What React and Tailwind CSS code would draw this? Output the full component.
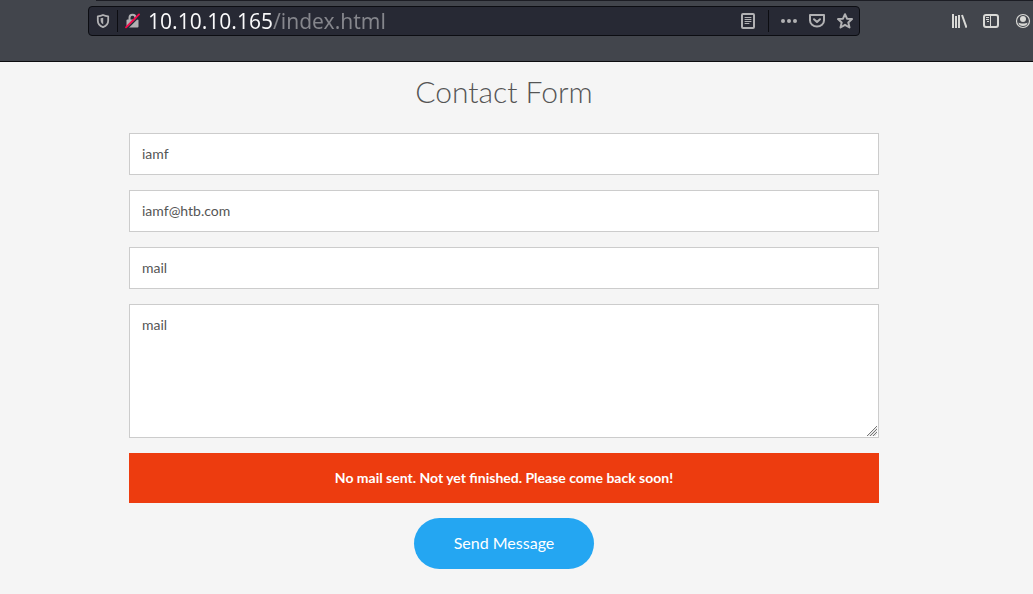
function Divider() {
  return <span className="h-[22px] w-px shrink-0 bg-[#0c0d12]" />;
}

function IconButton({ label, children }) {
  return (
    <button type="button" aria-label={label} className="flex size-4 shrink-0 items-center justify-center">
      {children}
    </button>
  );
}

function Svg({ children }) {
  return (
    <svg viewBox="0 0 16 16" className="size-4" fill="none" stroke="currentColor" strokeWidth="2" strokeLinejoin="round" strokeLinecap="round" aria-hidden="true">
      {children}
    </svg>
  );
}

function Toolbar() {
  return (
    <header className="flex h-[62px] items-start border-b border-[#0c0c0f] bg-[#42454c]">
      <div className="flex min-w-0 flex-1 flex-col pl-[88px]">
        <div className="ml-2 h-px bg-[#1c1d24]" />
        <div className="mt-[5px] flex items-start">
          <div className="mr-[91px] flex h-[30px] min-w-0 flex-1 items-center rounded border border-[#0c0d12] bg-[#272934] px-1.5 text-[#b1b1b3]">
            <IconButton label="Tracking protection">
              <Svg>
                <path d="M8 2C6.300 2.800 4.500 3.200 2.800 3.300V7.500C2.800 10.800 4.800 13 8 14.200C11.200 13 13.200 10.800 13.200 7.500V3.300C11.500 3.200 9.700 2.800 8 2Z" strokeWidth="1.800" />
                <path d="M8.200 4.800V11.300C6.300 10.300 5.600 9 5.600 7V5.300C6.600 5.200 7.400 5 8.200 4.800Z" fill="currentColor" stroke="none" />
              </Svg>
            </IconButton>
            <span className="mx-1.5 flex"><Divider /></span>
            <IconButton label="Connection is not secure">
              <Svg>
                <path d="M5.500 7.500V4.800A3 3 0 0 1 11.500 4.800V7.500" />
                <rect x="2.500" y="6.500" width="12" height="8" rx="1" fill="currentColor" stroke="none" />
                <path d="M3 15.600L16 2.700" stroke="#272934" strokeWidth="1.500" />
                <path d="M2 14.300L15 1.400" stroke="#f5084a" strokeWidth="1.900" />
              </Svg>
            </IconButton>
            <input
              aria-label="Address"
              defaultValue="10.10.10.165/index.html"
              className="ml-2 h-7 min-w-0 flex-1 bg-transparent bg-linear-to-r from-[#f9f9fa] from-[124px] to-[#85868c] to-[124px] bg-clip-text font-['Noto_Sans',sans-serif] text-[21px] leading-7 text-transparent outline-none"
            />
            <IconButton label="Reader view">
              <Svg>
                <rect x="2" y="1" width="12" height="14" rx="1" />
                <path d="M5 4.500H11M5 6.500H11M5 8.500H11M5 10.500H9" strokeWidth="1" />
              </Svg>
            </IconButton>
            <span className="mx-3 flex"><Divider /></span>
            <div className="flex gap-3">
              <IconButton label="Page actions">
                <svg viewBox="0 0 16 16" className="size-4" fill="currentColor" aria-hidden="true">
                  <circle cx="2" cy="8" r="2" />
                  <circle cx="8" cy="8" r="2" />
                  <circle cx="14" cy="8" r="2" />
                </svg>
              </IconButton>
              <IconButton label="Save to Pocket">
                <Svg>
                  <path d="M1 2H15V7.500A7 6 0 0 1 1 7.500Z" />
                  <path d="M5 6.200L8 9L11 6.200" />
                </Svg>
              </IconButton>
              <IconButton label="Bookmark">
                <Svg>
                  <path d="M8 1.200L10 5.700L15 6.100L11.300 9.500L12.500 14.500L8 11.800L3.500 14.500L4.700 9.500L1 6.100L6 5.700Z" />
                </Svg>
              </IconButton>
            </div>
          </div>
          <div className="flex h-[30px] shrink-0 items-center gap-4 pr-0.5 text-[#d9d9d6]">
            <IconButton label="Library">
              <Svg>
                <path d="M2 1V15M5 3V15M8 2V15M11 2L15.500 14.600" strokeLinecap="butt" />
              </Svg>
            </IconButton>
            <IconButton label="Sidebars">
              <Svg>
                <rect x="1" y="2" width="14" height="12" rx="2" />
                <path d="M7.500 2V14" strokeWidth="1" />
                <path d="M3 4.500H6M3 6.500H6M4 8.500H6" strokeWidth="1" strokeLinecap="butt" />
              </Svg>
            </IconButton>
            <IconButton label="Account">
              <Svg>
                <circle cx="8" cy="8" r="6.500" strokeWidth="1.200" />
                <circle cx="8" cy="6" r="3" fill="currentColor" stroke="none" />
                <path d="M3.500 9.500C5 10.800 11 10.800 12.500 9.500C12.500 12 10.500 13 8 13S3.500 12 3.500 9.500Z" fill="currentColor" stroke="none" />
              </Svg>
            </IconButton>
          </div>
        </div>
      </div>
    </header>
  );
}

const field =
  "block w-full border border-[#cccccc] bg-white px-3 text-sm text-[#555555] outline-none";

function TextField({ label, type = "text", value }) {
  return <input aria-label={label} type={type} defaultValue={value} className={`${field} h-[42px] pb-0.5`} />;
}

export default function App() {
  return (
    <div className="flex min-h-screen flex-col bg-[#f5f5f5] font-[Lato,sans-serif]">
      <Toolbar />
      <main className="flex flex-1 flex-col items-center pr-[25px]">
        <h1 className="mt-[11px] text-[30px] leading-9 font-light text-[#555555]">Contact Form</h1>
        <form className="mt-6 flex w-full max-w-[750px] flex-col gap-[15px]" onSubmit={(e) => e.preventDefault()}>
          <TextField label="Your name" value="iamf" />
          <TextField label="Your email" type="email" value="iamf@htb.com" />
          <TextField label="Subject" value="mail" />
          <div className="relative">
            <textarea aria-label="Message" defaultValue="mail" className={`${field} h-[134px] resize-y py-2.5 leading-5`} />
            <svg viewBox="0 0 12 12" className="pointer-events-none absolute right-px bottom-px size-3" aria-hidden="true">
              <rect width="12" height="12" fill="#ffffff" />
              <path d="M1 11L11 1M4 11L11 4M7 11L11 7" stroke="#777777" strokeWidth="1" />
              <path d="M2.500 11L11 2.500M5.500 11L11 5.500M8.500 11L11 8.500" stroke="#cfcfcf" strokeWidth="1" />
            </svg>
          </div>
          <p role="alert" className="bg-[#ed3c0f] p-[15px] text-center text-sm leading-5 font-bold text-white">
            No mail sent. Not yet finished. Please come back soon!
          </p>
          <button type="submit" className="h-[51px] self-center rounded-full bg-[#24a6f2] px-10 pb-0.5 text-base text-white">
            Send Message
          </button>
        </form>
      </main>
    </div>
  );
}
